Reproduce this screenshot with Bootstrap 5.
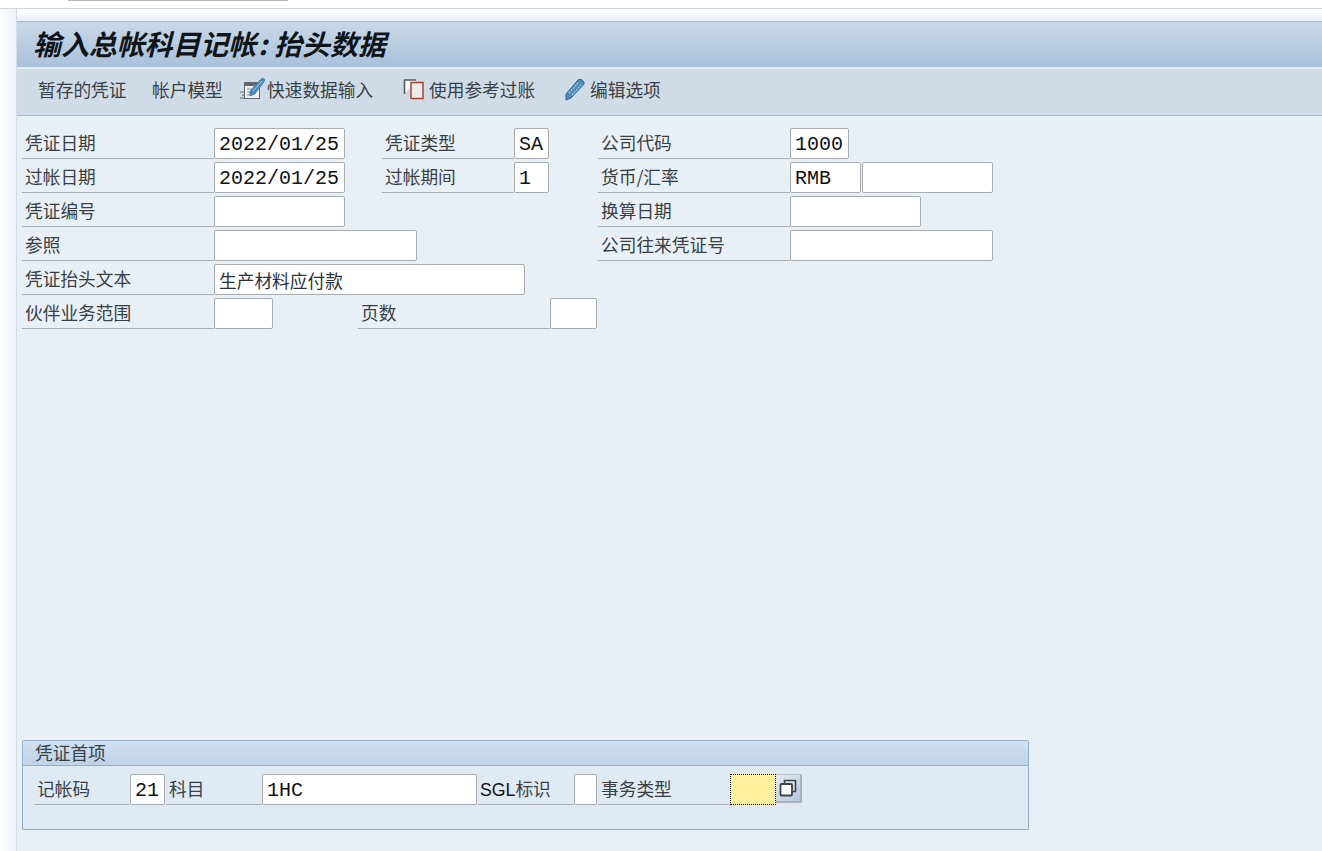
<!DOCTYPE html>
<html lang="zh-CN">
<head>
  <meta charset="UTF-8" />
  <title>输入总帐科目记帐: 抬头数据</title>
  <link href="https://cdn.jsdelivr.net/npm/bootstrap@5.3.3/dist/css/bootstrap.min.css" rel="stylesheet">
  <style>
    html, body { height: 851px; overflow: hidden; }
    body { background: #fff; font-family: "Noto Sans CJK SC", sans-serif; color: #3a3f45; }
    .top-strip { height: 9px; border-bottom: 1px solid #ced4da; background: #fff; }
    .top-tab { width: 220px; height: 1px; margin-left: 68px; background: #b5b9bd; }
    .page-wrap { height: 842px; background: linear-gradient(to bottom, #fff, #e8f0f6 12px); }
    .left-gutter { width: 17px; background: linear-gradient(to right, #fff, #eef3f8); border-right: 1px solid #d3dde8; }
    .sheet { padding-top: 12px; }
    .title-bar { height: 46px; padding-left: 16px; border-top: 1px solid #a9b8c8; background: linear-gradient(to bottom, #c9d9e8, #a9c1da); }
    .title-bar h1 { margin: 0; font-size: 27.9px; line-height: 43px; font-weight: 700; font-style: italic; color: #10151a; white-space: nowrap; }
    .title-bar h1 i { padding: 0 7px 0 2px; }
    .tool-bar { height: 49px; padding: 0 0 6px 21px; border-top: 2px solid #e3ebf3; border-bottom: 1px solid #aab5c1; background: #cfdce8; font-size: 17.7px; }
    .tool-bar span { white-space: nowrap; }
    .tool-bar svg { flex: none; }
    .t1 { width: 114px; }
    .t2 { width: 88px; }
    .t3 { width: 163px; }
    .t4 { width: 162px; }
    .form-area { height: 626px; padding: 12px 0 0 5px; }
    .f-row { height: 34px; }
    .f-label { height: 31px; padding-left: 3px; border-bottom: 1px solid #a9afb5; font-size: 17.7px; line-height: 28px; white-space: nowrap; }
    .f-input.form-control { height: 31px; min-height: 0; padding: 2px 4px 0; border: 1px solid #a8adb2; border-radius: 2px; background: #fff; color: #111; box-shadow: none; font-family: "Liberation Mono", "Noto Sans CJK SC", monospace; font-size: 20px; line-height: 27px; }
    .f-input.cjk { padding-top: 0; font-family: "Noto Sans CJK SC", sans-serif; font-size: 17.7px; color: #2d3238; }
    .w-192 { width: 192px; } .w-132 { width: 132px; }
    .i-131 { width: 131px; } .i-35 { width: 35px; } .i-59 { width: 59px; } .i-71 { width: 71px; }
    .i-203 { width: 203px; } .i-311 { width: 311px; } .i-47 { width: 47px; }
    .s-37 { width: 37px; } .s-49 { width: 49px; } .s-253 { width: 253px; } .s-181 { width: 181px; } .s-85 { width: 85px; } .s-1 { width: 1px; }
    .entry-box { width: 1007px; height: 90px; margin-top: 408px; border: 1px solid #93b1cd; border-radius: 2px 2px 0 0; background: #deeaf4; }
    .entry-head { height: 25px; padding-left: 12px; border-bottom: 1px solid #93b1cd; background: linear-gradient(to bottom, #cfe0f0, #bed3e8); font-size: 17.7px; line-height: 22px; }
    .entry-row { height: 31px; margin-top: 8px; padding-left: 11px; }
    .l-96 { width: 96px; } .l-132 { width: 132px; }
    .f-label.sgl { padding-left: 2px; font-family: "Liberation Sans", sans-serif; color: #111; }
    .sgl b { font-family: "Noto Sans CJK SC", sans-serif; font-weight: 400; color: #3a3f45; }
    .i-215 { width: 215px; } .i-23 { width: 23px; }
    .i-req.form-control { width: 46px; background: #fff0a0; border: 1px dotted #000; border-radius: 0; }
    .help-btn.btn { width: 26px; height: 29px; padding: 0; border: 0; border-right: 2px solid #a9b0b8; border-bottom: 2px solid #a9b0b8; border-top: 1px solid #b9c1ca; border-radius: 0 2px 2px 0; background: linear-gradient(135deg, #e4ebf3, #b4c7de); line-height: 0; }
  </style>
</head>
<body>
  <div class="top-strip"><div class="top-tab"></div></div>

  <div class="d-flex page-wrap">
    <div class="left-gutter"></div>
    <div class="flex-grow-1 sheet">
      <div class="title-bar"><h1>输入总帐科目记帐<i>:</i>抬头数据</h1></div>

      <div class="tool-bar d-flex align-items-center">
        <span class="t1">暂存的凭证</span>
        <span class="t2">帐户模型</span>
        <span class="t3 d-flex align-items-center">
          <svg width="27" height="24" viewBox="0 0 27 24">
            <rect x="4.5" y="5.5" width="15" height="16" fill="#f2f3f4" stroke="#63676c"/>
            <rect x="5" y="6" width="14" height="3" fill="#63676c"/>
            <path d="M0 15h5M2 18h3M0 21h5" stroke="#63676c" fill="none"/>
            <path d="M7 12h5M7 15h4M7 18h5" stroke="#8b9096" fill="none"/>
            <path d="M10 14L21 2c2-2 5 0 3 3L15 17l-5 2z" fill="#4a8ab8" stroke="#3a7aa8" stroke-width=".6"/>
            <path d="M13 14L22 4" stroke="#a9cbe2" fill="none"/>
          </svg>
          快速数据输入
        </span>
        <span class="t4 d-flex align-items-center">
          <svg class="me-1" width="22" height="22" viewBox="0 0 22 22">
            <path d="M13 2H1.5v14" fill="#fff" stroke="#55585c" stroke-width="1.6"/>
            <rect x="8" y="4.5" width="12" height="16" fill="#ececec" stroke="#a33a28" stroke-width="1.4"/>
          </svg>
          使用参考过账
        </span>
        <span class="d-flex align-items-center">
          <svg class="me-1" width="21" height="24" viewBox="0 0 21 24">
            <path d="M1 17L13 3c2-2 7 1 6 4L6 21l-5 2z" fill="#4f8cba" stroke="#27668f" stroke-width="1"/>
            <path d="M4 16L14 5M7 18L17 7" stroke="#a9cbe2" stroke-width="1.2" stroke-dasharray="2 1" fill="none"/>
          </svg>
          编辑选项
        </span>
      </div>

      <div class="form-area">
        <div class="d-flex f-row">
          <div class="f-label w-192">凭证日期</div>
          <input class="form-control f-input i-131" value="2022/01/25">
          <div class="s-37"></div>
          <div class="f-label w-132">凭证类型</div>
          <input class="form-control f-input i-35" value="SA">
          <div class="s-49"></div>
          <div class="f-label w-192">公司代码</div>
          <input class="form-control f-input i-59" value="1000">
        </div>
        <div class="d-flex f-row">
          <div class="f-label w-192">过帐日期</div>
          <input class="form-control f-input i-131" value="2022/01/25">
          <div class="s-37"></div>
          <div class="f-label w-132">过帐期间</div>
          <input class="form-control f-input i-35" value="1">
          <div class="s-49"></div>
          <div class="f-label w-192">货币/汇率</div>
          <input class="form-control f-input i-71" value="RMB">
          <div class="s-1"></div>
          <input class="form-control f-input i-131" value="">
        </div>
        <div class="d-flex f-row">
          <div class="f-label w-192">凭证编号</div>
          <input class="form-control f-input i-131" value="">
          <div class="s-253"></div>
          <div class="f-label w-192">换算日期</div>
          <input class="form-control f-input i-131" value="">
        </div>
        <div class="d-flex f-row">
          <div class="f-label w-192">参照</div>
          <input class="form-control f-input i-203" value="">
          <div class="s-181"></div>
          <div class="f-label w-192">公司往来凭证号</div>
          <input class="form-control f-input i-203" value="">
        </div>
        <div class="d-flex f-row">
          <div class="f-label w-192">凭证抬头文本</div>
          <input class="form-control f-input cjk i-311" value="生产材料应付款">
        </div>
        <div class="d-flex f-row">
          <div class="f-label w-192">伙伴业务范围</div>
          <input class="form-control f-input i-59" value="">
          <div class="s-85"></div>
          <div class="f-label w-192">页数</div>
          <input class="form-control f-input i-47" value="">
        </div>

        <div class="entry-box">
          <div class="entry-head">凭证首项</div>
          <div class="d-flex entry-row">
            <div class="f-label l-96">记帐码</div>
            <input class="form-control f-input i-35" value="21">
            <div class="s-1"></div>
            <div class="f-label l-96">科目</div>
            <input class="form-control f-input i-215" value="1HC">
            <div class="s-1"></div>
            <div class="f-label l-96 sgl">SGL<b>标识</b></div>
            <input class="form-control f-input i-23" value="">
            <div class="s-1"></div>
            <div class="f-label l-132">事务类型</div>
            <input class="form-control f-input i-req" value="">
            <button type="button" class="btn help-btn">
              <svg width="18" height="18" viewBox="0 0 18 18">
                <path d="M5.5 5V1.5h11v11H13" fill="#d6dde6" stroke="#3f4246" stroke-width="1.6"/>
                <rect x="1.5" y="5" width="11.5" height="11.5" rx="1" fill="#fff" stroke="#3f4246" stroke-width="1.8"/>
              </svg>
            </button>
          </div>
        </div>
      </div>
    </div>
  </div>

  <script src="https://cdn.jsdelivr.net/npm/bootstrap@5.3.3/dist/js/bootstrap.bundle.min.js"></script>
</body>
</html>
